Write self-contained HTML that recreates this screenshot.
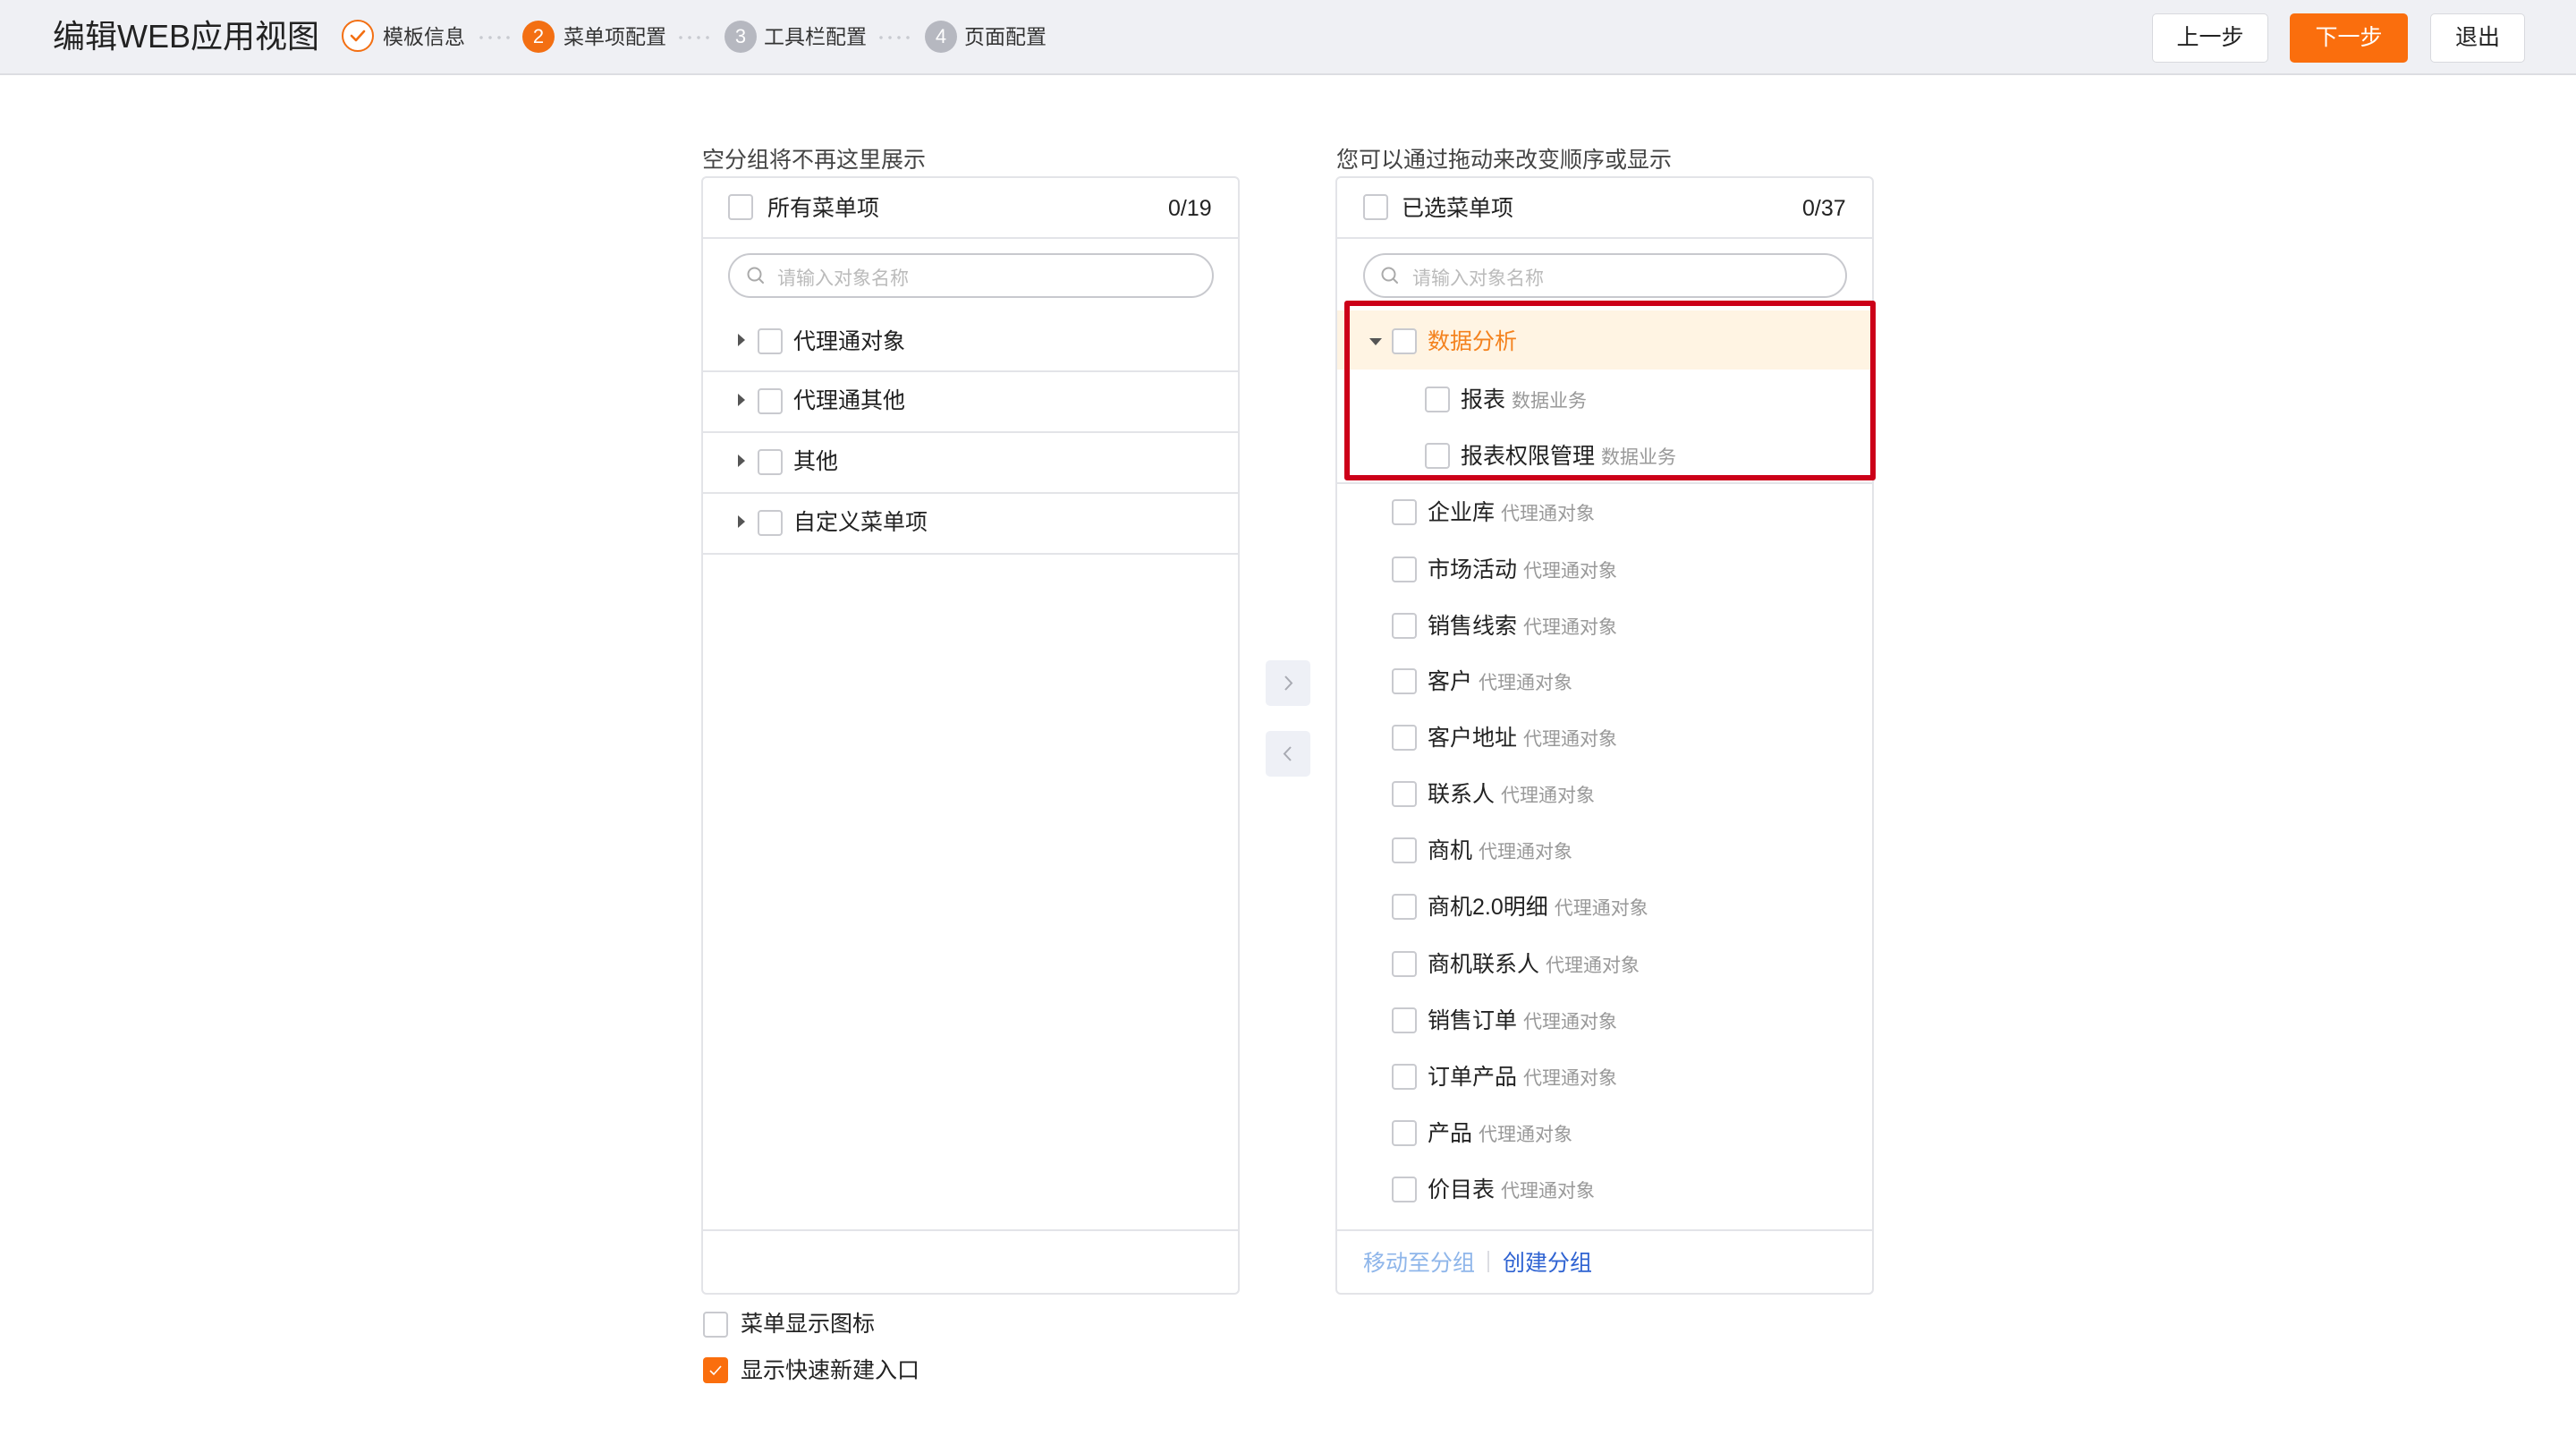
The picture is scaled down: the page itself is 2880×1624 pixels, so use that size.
<!DOCTYPE html>
<html><head><meta charset="utf-8"><style>
*{box-sizing:border-box;margin:0;padding:0}
body{width:2880px;height:1624px;background:#fff;font-family:"Liberation Sans","Noto Sans CJK SC",sans-serif;color:#222;position:relative;overflow:hidden}
.a{position:absolute;white-space:nowrap}
.hdr{position:absolute;left:0;top:0;width:2880px;height:84px;background:#eff0f4;border-bottom:2px solid #dcdde2}
.circ{position:absolute;width:36px;height:36px;border-radius:50%;color:#fff;font-size:22px;text-align:center;line-height:36px}
.st{font-size:23px;color:#333;line-height:30px}
.dots{position:absolute;height:4px;width:40px;background:radial-gradient(circle,#c8cad0 1.6px,transparent 2px) 0 0/10px 4px}
.btn{position:absolute;top:15px;height:55px;border-radius:5px;background:#fff;border:1px solid #d8d9de;font-size:25px;text-align:center;line-height:53px;color:#222}
.lbl{font-size:25px;color:#444}
.panel{position:absolute;top:197px;height:1250px;border:2px solid #e3e4e8;border-radius:6px;background:#fff}
.cb{position:absolute;width:28px;height:29px;border:2px solid #c9cacf;border-radius:4px;background:#fff}
.txt{font-size:25px;line-height:30px;color:#222;margin-top:2px}
.sub{font-size:21px;color:#999}
.line{position:absolute;height:2px;background:#e3e4e8}
.search{position:absolute;height:50px;border:2px solid #c8c9ce;border-radius:25px;background:#fff}
.ph{font-size:21px;color:#bbb}
.tri{position:absolute;width:0;height:0}
.mb{position:absolute;left:1415px;width:50px;height:51px;background:#eef0f6;border-radius:5px}
</style></head><body>
<div class="hdr"></div>
<div class="a" style="left:59px;top:20px;font-size:36px;color:#222;line-height:42px">编辑WEB应用视图</div>
<div class="circ" style="left:382px;top:22px;border:2.5px solid #f36f12;background:#fff"><svg width="32" height="32" viewBox="0 0 32 32" style="position:absolute;left:0;top:0"><path d="M9 16 L14 21 L23 11" fill="none" stroke="#f36f12" stroke-width="2.6" stroke-linecap="round" stroke-linejoin="round"/></svg></div>
<div class="a st" style="left:428px;top:26px">模板信息</div>
<div class="dots" style="left:533px;top:40px"></div>
<div class="circ" style="left:584px;top:23px;background:#f36f12">2</div>
<div class="a st" style="left:630px;top:26px">菜单项配置</div>
<div class="dots" style="left:756px;top:40px"></div>
<div class="circ" style="left:810px;top:23px;background:#b6b8c0">3</div>
<div class="a st" style="left:854px;top:26px">工具栏配置</div>
<div class="dots" style="left:980px;top:40px"></div>
<div class="circ" style="left:1034px;top:23px;background:#b6b8c0">4</div>
<div class="a st" style="left:1078px;top:26px">页面配置</div>
<div class="btn" style="left:2406px;width:130px">上一步</div>
<div class="btn" style="left:2560px;width:132px;background:#fa6e0d;border-color:#fa6e0d;color:#fff">下一步</div>
<div class="btn" style="left:2717px;width:106px">退出</div>

<!-- left panel -->
<div class="a lbl" style="left:785px;top:159px">空分组将不再这里展示</div>
<div class="panel" style="left:784px;width:602px"></div>
<div class="cb" style="left:814px;top:217px"></div>
<div class="a txt" style="left:858px;top:216px">所有菜单项</div>
<div class="a txt" style="left:1306px;top:216px">0/19</div>
<div class="line" style="left:786px;top:265px;width:598px"></div>
<div class="search" style="left:814px;top:283px;width:543px"></div>
<svg class="a" style="left:834px;top:297px" width="22" height="22" viewBox="0 0 22 22"><circle cx="9.5" cy="9.5" r="7" fill="none" stroke="#aaa" stroke-width="2"/><path d="M14.5 14.5 L19 19" stroke="#aaa" stroke-width="2" stroke-linecap="round"/></svg>
<div class="a ph" style="left:869px;top:295px">请输入对象名称</div>

<div class="tri" style="left:825px;top:373px;border-left:8px solid #555;border-top:7px solid transparent;border-bottom:7px solid transparent"></div>
<div class="cb" style="left:847px;top:367px"></div><div class="a txt" style="left:887px;top:365px">代理通对象</div>
<div class="line" style="left:786px;top:414px;width:598px"></div>
<div class="tri" style="left:825px;top:440px;border-left:8px solid #555;border-top:7px solid transparent;border-bottom:7px solid transparent"></div>
<div class="cb" style="left:847px;top:434px"></div><div class="a txt" style="left:887px;top:431px">代理通其他</div>
<div class="line" style="left:786px;top:482px;width:598px"></div>
<div class="tri" style="left:825px;top:508px;border-left:8px solid #555;border-top:7px solid transparent;border-bottom:7px solid transparent"></div>
<div class="cb" style="left:847px;top:502px"></div><div class="a txt" style="left:887px;top:499px">其他</div>
<div class="line" style="left:786px;top:550px;width:598px"></div>
<div class="tri" style="left:825px;top:576px;border-left:8px solid #555;border-top:7px solid transparent;border-bottom:7px solid transparent"></div>
<div class="cb" style="left:847px;top:570px"></div><div class="a txt" style="left:887px;top:567px">自定义菜单项</div>
<div class="line" style="left:786px;top:618px;width:598px"></div>
<div class="line" style="left:786px;top:1374px;width:598px"></div>

<!-- middle -->
<div class="mb" style="top:738px"><svg width="50" height="51" viewBox="0 0 50 51"><path d="M22 18 L29 25.5 L22 33" fill="none" stroke="#a8aab2" stroke-width="2"/></svg></div>
<div class="mb" style="top:817px"><svg width="50" height="51" viewBox="0 0 50 51"><path d="M28 18 L21 25.5 L28 33" fill="none" stroke="#a8aab2" stroke-width="2"/></svg></div>

<!-- right panel -->
<div class="a lbl" style="left:1494px;top:159px">您可以通过拖动来改变顺序或显示</div>
<div class="panel" style="left:1493px;width:602px"></div>
<div class="cb" style="left:1524px;top:217px"></div>
<div class="a txt" style="left:1567px;top:216px">已选菜单项</div>
<div class="a txt" style="left:2015px;top:216px">0/37</div>
<div class="line" style="left:1495px;top:265px;width:598px"></div>
<div class="search" style="left:1524px;top:283px;width:541px"></div>
<svg class="a" style="left:1543px;top:297px" width="22" height="22" viewBox="0 0 22 22"><circle cx="9.5" cy="9.5" r="7" fill="none" stroke="#aaa" stroke-width="2"/><path d="M14.5 14.5 L19 19" stroke="#aaa" stroke-width="2" stroke-linecap="round"/></svg>
<div class="a ph" style="left:1579px;top:295px">请输入对象名称</div>

<div class="a" style="left:1495px;top:347px;width:598px;height:66px;background:#fff4e3"></div>
<div class="tri" style="left:1531px;top:378px;border-top:8px solid #555;border-left:7px solid transparent;border-right:7px solid transparent"></div>
<div class="cb" style="left:1556px;top:367px"></div><div class="a txt" style="left:1596px;top:365px;color:#f4821e">数据分析</div>
<div class="cb" style="left:1593px;top:432px"></div><div class="a txt" style="left:1633px;top:430px">报表 <span class="sub">数据业务</span></div>
<div class="cb" style="left:1593px;top:495px"></div><div class="a txt" style="left:1633px;top:493px">报表权限管理 <span class="sub">数据业务</span></div>
<div class="line" style="left:1495px;top:539px;width:598px"></div>
<div class="a" style="left:1503px;top:336px;width:594px;height:201px;border:6px solid #cc0019;border-radius:3px"></div>

<div class="cb" style="left:1556px;top:558px"></div><div class="a txt" style="left:1596px;top:556px">企业库 <span class="sub">代理通对象</span></div>
<div class="cb" style="left:1556px;top:622px"></div><div class="a txt" style="left:1596px;top:620px">市场活动 <span class="sub">代理通对象</span></div>
<div class="cb" style="left:1556px;top:685px"></div><div class="a txt" style="left:1596px;top:683px">销售线索 <span class="sub">代理通对象</span></div>
<div class="cb" style="left:1556px;top:747px"></div><div class="a txt" style="left:1596px;top:745px">客户 <span class="sub">代理通对象</span></div>
<div class="cb" style="left:1556px;top:810px"></div><div class="a txt" style="left:1596px;top:808px">客户地址 <span class="sub">代理通对象</span></div>
<div class="cb" style="left:1556px;top:873px"></div><div class="a txt" style="left:1596px;top:871px">联系人 <span class="sub">代理通对象</span></div>
<div class="cb" style="left:1556px;top:936px"></div><div class="a txt" style="left:1596px;top:934px">商机 <span class="sub">代理通对象</span></div>
<div class="cb" style="left:1556px;top:999px"></div><div class="a txt" style="left:1596px;top:997px">商机2.0明细 <span class="sub">代理通对象</span></div>
<div class="cb" style="left:1556px;top:1063px"></div><div class="a txt" style="left:1596px;top:1061px">商机联系人 <span class="sub">代理通对象</span></div>
<div class="cb" style="left:1556px;top:1126px"></div><div class="a txt" style="left:1596px;top:1124px">销售订单 <span class="sub">代理通对象</span></div>
<div class="cb" style="left:1556px;top:1189px"></div><div class="a txt" style="left:1596px;top:1187px">订单产品 <span class="sub">代理通对象</span></div>
<div class="cb" style="left:1556px;top:1252px"></div><div class="a txt" style="left:1596px;top:1250px">产品 <span class="sub">代理通对象</span></div>
<div class="cb" style="left:1556px;top:1315px"></div><div class="a txt" style="left:1596px;top:1313px">价目表 <span class="sub">代理通对象</span></div>
<div class="line" style="left:1495px;top:1374px;width:598px"></div>
<div class="a" style="left:1524px;top:1392px;font-size:25px;color:#8fb6ea">移动至分组</div>
<div class="a" style="left:1663px;top:1398px;width:2px;height:24px;background:#dcdde2"></div>
<div class="a" style="left:1680px;top:1392px;font-size:25px;color:#2f63d2">创建分组</div>

<!-- bottom -->
<div class="cb" style="left:786px;top:1466px"></div>
<div class="a txt" style="left:828px;top:1463px;font-size:25px">菜单显示图标</div>
<div class="a" style="left:786px;top:1517px;width:28px;height:29px;background:#fa6e0d;border-radius:4px"><svg width="28" height="29" viewBox="0 0 28 29"><path d="M8 15 L12 19 L20 10" fill="none" stroke="#fff" stroke-width="1.6"/></svg></div>
<div class="a txt" style="left:828px;top:1515px;font-size:25px">显示快速新建入口</div>
</body></html>
